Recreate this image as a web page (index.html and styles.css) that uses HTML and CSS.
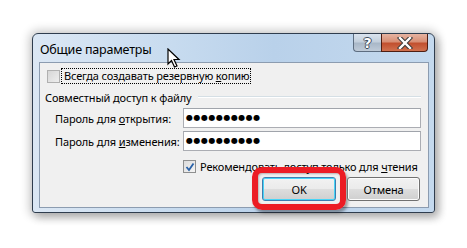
FILE: index.html
```html
<!DOCTYPE html>
<html lang="ru">
<head>
<meta charset="utf-8">
<title>Общие параметры</title>
<link rel="stylesheet" href="styles.css">
</head>
<body>
<div class="stage">
  <div class="dialog">
    <div class="titlebar">
      <span class="title">Общие параметры</span>
      <div class="caption-btns">
        <div class="cap help"><span>?</span></div>
        <div class="cap close">
          <svg width="16" height="12" viewBox="0 0 16 12"><path d="M3 1 L13 11 M13 1 L3 11" stroke="#3a3a3a" stroke-width="4.4" stroke-linecap="square"/><path d="M3 1 L13 11 M13 1 L3 11" stroke="#ffffff" stroke-width="2.4" stroke-linecap="square"/></svg>
        </div>
      </div>
    </div>
    <div class="content">
      <div class="row-check">
        <span class="checkbox disabled"></span>
        <span class="focus">Всегда создавать резервную <u>к</u>опию</span>
      </div>
      <div class="group">
        <span>Совместный доступ к файлу</span>
        <span class="line"></span>
      </div>
      <div class="field">
        <label>Пароль для <u>о</u>ткрытия:</label>
        <div class="input">●●●●●●●●●●</div>
      </div>
      <div class="field second">
        <label>Пароль для <u>и</u>зменения:</label>
        <div class="input">●●●●●●●●●●</div>
      </div>
      <div class="row-check2">
        <span class="checkbox checked">
          <svg width="10" height="10" viewBox="0 0 10 10"><path d="M1.5 5 L4 8 L8.5 1.5" fill="none" stroke="#2a62a8" stroke-width="1.8"/></svg>
        </span>
        <span>Рекомендовать доступ только для <u>ч</u>тения</span>
      </div>
      <div class="buttons">
        <div class="btn default">OK<span class="highlight"></span></div>
        <div class="btn">Отмена</div>
      </div>
    </div>
    <svg class="cursor" width="14" height="21" viewBox="0 0 14 21"><path d="M1 1 L1 16 L4.5 12.5 L7.5 19 L10 18 L7 11.5 L12 11.5 Z" fill="#ffffff" stroke="#000000" stroke-width="1.2" stroke-linejoin="miter"/></svg>
  </div>
</div>
</body>
</html>
```
FILE: styles.css
```css
* { box-sizing: border-box; }
html, body { margin: 0; padding: 0; background: #ffffff; }
body {
  width: 467px;
  height: 248px;
  overflow: hidden;
  font-family: "Noto Sans", "DejaVu Sans", sans-serif;
  font-size: 11px;
  letter-spacing: -0.15px;
  color: #000;
  white-space: nowrap;
}
.stage {
  padding: 33px 0 0 32px;
}
.dialog {
  position: relative;
  width: 403px;
  height: 180px;
  border: 1px solid #2f3d4e;
  border-radius: 6px 6px 3px 3px;
  background: linear-gradient(90deg, #dbe7f4 0%, #c7dbef 35%, #b9d1ea 60%, #c4d9ee 100%);
  box-shadow: 0 0 10px 3px rgba(0,0,0,0.2), 4px 5px 8px rgba(0,0,0,0.2);
  padding: 0 5px 4px 6px;
  display: flex;
  flex-direction: column;
}
.titlebar {
  height: 28px;
  display: flex;
  align-items: flex-start;
  justify-content: space-between;
}
.title {
  font-size: 12.5px;
  letter-spacing: -0.2px;
  margin: 7px 0 0 1px;
  color: #000;
}
.caption-btns {
  display: flex;
  margin-right: 1px;
}
.cap {
  height: 18px;
  border: 1px solid #5d6d80;
  border-top: none;
  display: flex;
  align-items: center;
  justify-content: center;
}
.help {
  width: 28px;
  border-radius: 0 0 0 4px;
  border-right: none;
  background: linear-gradient(180deg, #d9e3ee 0%, #c3cfdc 45%, #a9b8c8 55%, #bfcbd8 100%);
}
.help span {
  font-family: "DejaVu Sans", sans-serif;
  font-weight: bold;
  font-size: 14px;
  color: #ffffff;
  text-shadow: 1px 0 0 #3e4b5a, -1px 0 0 #3e4b5a, 0 1px 0 #3e4b5a, 0 -1px 0 #3e4b5a;
  line-height: 1;
}
.close {
  width: 47px;
  border-color: #4e1e12;
  border-radius: 0 0 4px 0;
  background: linear-gradient(180deg, #e6b4a2 0%, #d88f75 45%, #c2502f 55%, #d0714f 100%);
}
.content {
  flex: 1;
  background: #f0f0f0;
  border: 1px solid #8c9cb0;
  position: relative;
}
.row-check {
  display: flex;
  align-items: center;
  margin: 5px 0 0 7px;
  height: 16px;
}
.checkbox {
  width: 13px;
  height: 13px;
  border: 1px solid #8e8f8f;
  background: linear-gradient(135deg, #dcdcdc, #f4f4f4);
  display: inline-flex;
  align-items: center;
  justify-content: center;
  flex: none;
}
.checkbox.disabled {
  border-color: #b0b0b0;
  background: linear-gradient(135deg, #d6d6d6, #eeeeee);
}
.focus {
  margin-left: 1px;
  padding: 0 1px 0 2px;
  border: 1px dotted #000;
  line-height: 14px;
}
.group {
  display: flex;
  align-items: center;
  margin: 5px 7px 0 5px;
  height: 16px;
  gap: 6px;
}
.group .line {
  flex: 1;
  height: 2px;
  background: #d5dfe5;
  border-bottom: 1px solid #ffffff;
}
.field {
  display: flex;
  align-items: center;
  margin: 3px 7px 0 15px;
  height: 20px;
}
.field.second { margin-top: 3px; }
.field label {
  width: 128px;
  flex: none;
}
.input {
  flex: 1;
  height: 20px;
  background: #ffffff;
  border: 1px solid #abadb3;
  border-top-color: #a0a4ab;
  font-family: "DejaVu Sans", sans-serif;
  font-size: 8px;
  letter-spacing: 0.5px;
  padding-left: 2px;
  line-height: 18px;
}
.row-check2 {
  display: flex;
  align-items: center;
  gap: 4px;
  margin: 9px 0 0 143px;
  height: 13px;
}
.buttons {
  display: flex;
  gap: 11px;
  margin: 4px 0 0 222px;
}
.btn {
  position: relative;
  width: 74px;
  height: 24px;
  border: 1px solid #707070;
  border-radius: 3px;
  background: linear-gradient(180deg, #f2f2f2 0%, #ebebeb 48%, #dddddd 52%, #cfcfcf 100%);
  display: flex;
  align-items: center;
  justify-content: center;
  box-shadow: inset 0 0 0 1px #fcfcfc;
}
.btn + .btn { width: 73px; }
.btn.default {
  border-color: #3c7fb1;
  box-shadow: inset 0 0 0 1px #48d4f6;
}
.highlight {
  position: absolute;
  left: -11px;
  top: -11px;
  width: 94px;
  height: 43px;
  border: 6px solid #ec1c24;
  border-radius: 10px;
  box-shadow: 2px 3px 3px rgba(0,0,0,0.35), inset 1px 1px 2px rgba(0,0,0,0.25);
}
.cursor {
  position: absolute;
  left: 134px;
  top: 14px;
}
```
